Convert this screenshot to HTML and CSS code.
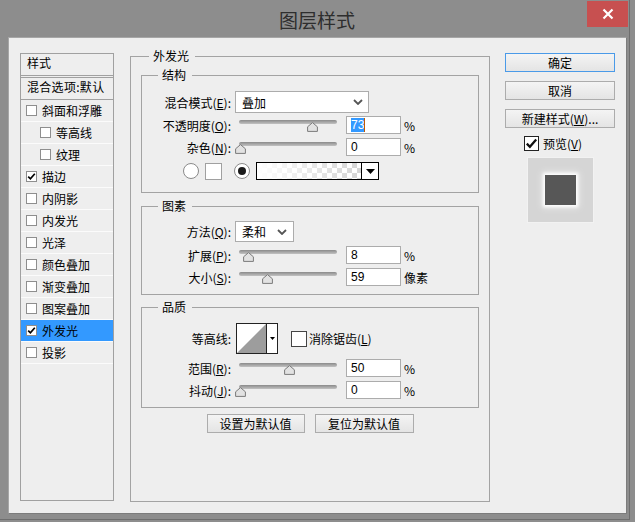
FILE: index.html
```html
<!DOCTYPE html>
<html>
<head>
<meta charset="utf-8">
<link rel="stylesheet" href="styles.css">
</head>
<body>
<div class="window">
  <div class="titlebar">
    <div class="title">图层样式</div>
    <div class="close"><svg width="12" height="12" viewBox="0 0 12 12"><path d="M1.5 1.5 L10.5 10.5 M10.5 1.5 L1.5 10.5" stroke="#fff" stroke-width="2.2" fill="none"/></svg></div>
  </div>
  <div class="content">
    <div class="list">
      <div class="list-head">样式</div>
      <div class="list-blend">混合选项:默认</div>
      <div class="item"><span class="cb"></span>斜面和浮雕</div>
      <div class="item sub"><span class="cb"></span>等高线</div>
      <div class="item sub"><span class="cb"></span>纹理</div>
      <div class="item"><span class="cb"><svg width="9" height="9" viewBox="0 0 9 9"><path d="M1.2 4.6 L3.4 6.8 L7.8 1.8" stroke="#000" stroke-width="1.7" fill="none"/></svg></span>描边</div>
      <div class="item"><span class="cb"></span>内阴影</div>
      <div class="item"><span class="cb"></span>内发光</div>
      <div class="item"><span class="cb"></span>光泽</div>
      <div class="item"><span class="cb"></span>颜色叠加</div>
      <div class="item"><span class="cb"></span>渐变叠加</div>
      <div class="item"><span class="cb"></span>图案叠加</div>
      <div class="item sel"><span class="cb"><svg width="9" height="9" viewBox="0 0 9 9"><path d="M1.2 4.6 L3.4 6.8 L7.8 1.8" stroke="#000" stroke-width="1.7" fill="none"/></svg></span>外发光</div>
      <div class="item"><span class="cb"></span>投影</div>
    </div>

    <div class="main">
      <div class="group outer">
        <div class="legend lg-outer">外发光</div>

        <div class="group inner s1">
          <div class="legend lg-inner">结构</div>
          <div class="row r-sel mt8">
            <div class="lbl">混合模式(<u>E</u>):</div>
            <div class="select wide"><span>叠加</span><svg width="10" height="6" viewBox="0 0 10 6"><path d="M1 1 L5 5 L9 1" stroke="#555" stroke-width="1.8" fill="none"/></svg></div>
          </div>
          <div class="row r mt3">
            <div class="lbl">不透明度(<u>O</u>):</div>
            <div class="slider"><div class="track"></div><svg class="thumb" style="left:72px" width="11" height="10" viewBox="0 0 11 10"><path d="M5.5 0.6 L10.4 4.8 L10.4 9.4 L0.6 9.4 L0.6 4.8 Z" fill="#e2e2e2" stroke="#7a7a7a" stroke-width="1"/></svg></div>
            <div class="num"><span class="hl">73</span><span class="caret"></span></div>
            <div class="unit">%</div>
          </div>
          <div class="row r mt4">
            <div class="lbl">杂色(<u>N</u>):</div>
            <div class="slider"><div class="track"></div><svg class="thumb" style="left:0px" width="11" height="10" viewBox="0 0 11 10"><path d="M5.5 0.6 L10.4 4.8 L10.4 9.4 L0.6 9.4 L0.6 4.8 Z" fill="#e2e2e2" stroke="#7a7a7a" stroke-width="1"/></svg></div>
            <div class="num">0</div>
            <div class="unit">%</div>
          </div>
          <div class="row r r-color">
            <div class="radio"></div>
            <div class="swatch"></div>
            <div class="radio on"></div>
            <div class="grad"><div class="grad-fill"></div><div class="grad-arrow"><svg width="9" height="5" viewBox="0 0 9 5"><path d="M0 0 L9 0 L4.5 5 Z" fill="#000"/></svg></div></div>
          </div>
        </div>

        <div class="group inner s2">
          <div class="legend lg-inner">图素</div>
          <div class="row r-sel2 mt7">
            <div class="lbl">方法(<u>Q</u>):</div>
            <div class="select small"><span>柔和</span><svg width="10" height="6" viewBox="0 0 10 6"><path d="M1 1 L5 5 L9 1" stroke="#555" stroke-width="1.8" fill="none"/></svg></div>
          </div>
          <div class="row r mt4">
            <div class="lbl">扩展(<u>P</u>):</div>
            <div class="slider"><div class="track"></div><svg class="thumb" style="left:8px" width="11" height="10" viewBox="0 0 11 10"><path d="M5.5 0.6 L10.4 4.8 L10.4 9.4 L0.6 9.4 L0.6 4.8 Z" fill="#e2e2e2" stroke="#7a7a7a" stroke-width="1"/></svg></div>
            <div class="num">8</div>
            <div class="unit">%</div>
          </div>
          <div class="row r mt4">
            <div class="lbl">大小(<u>S</u>):</div>
            <div class="slider"><div class="track"></div><svg class="thumb" style="left:27px" width="11" height="10" viewBox="0 0 11 10"><path d="M5.5 0.6 L10.4 4.8 L10.4 9.4 L0.6 9.4 L0.6 4.8 Z" fill="#e2e2e2" stroke="#7a7a7a" stroke-width="1"/></svg></div>
            <div class="num">59</div>
            <div class="unit">像素</div>
          </div>
        </div>

        <div class="group inner s3">
          <div class="legend lg-inner">品质</div>
          <div class="row r-contour mt8">
            <div class="lbl">等高线:</div>
            <div class="contour">
              <div class="contour-img"><svg width="29" height="29" viewBox="0 0 29 29"><path d="M0 29 L29 0 L29 29 Z" fill="#9d9d9d"/></svg></div>
              <div class="contour-drop"><svg width="5" height="3" viewBox="0 0 5 3"><path d="M0 0 L5 0 L2.5 3 Z" fill="#000"/></svg></div>
            </div>
            <div class="aa-cb"></div>
            <div class="aa-text">消除锯齿(<u>L</u>)</div>
          </div>
          <div class="row r mt5">
            <div class="lbl">范围(<u>R</u>):</div>
            <div class="slider"><div class="track"></div><svg class="thumb" style="left:49px" width="11" height="10" viewBox="0 0 11 10"><path d="M5.5 0.6 L10.4 4.8 L10.4 9.4 L0.6 9.4 L0.6 4.8 Z" fill="#e2e2e2" stroke="#7a7a7a" stroke-width="1"/></svg></div>
            <div class="num">50</div>
            <div class="unit">%</div>
          </div>
          <div class="row r mt4">
            <div class="lbl">抖动(<u>J</u>):</div>
            <div class="slider"><div class="track"></div><svg class="thumb" style="left:0px" width="11" height="10" viewBox="0 0 11 10"><path d="M5.5 0.6 L10.4 4.8 L10.4 9.4 L0.6 9.4 L0.6 4.8 Z" fill="#e2e2e2" stroke="#7a7a7a" stroke-width="1"/></svg></div>
            <div class="num">0</div>
            <div class="unit">%</div>
          </div>
        </div>

        <div class="defaults">
          <div class="btn w98">设置为默认值</div>
          <div class="btn w99">复位为默认值</div>
        </div>
      </div>
    </div>

    <div class="side">
      <div class="btn sbtn default">确定</div>
      <div class="btn sbtn">取消</div>
      <div class="btn sbtn">新建样式(<u>W</u>)...</div>
      <div class="pv">
        <span class="pv-cb"><svg width="13" height="13" viewBox="0 0 13 13"><path d="M1.8 6.6 L4.9 9.7 L11.2 2.6" stroke="#111" stroke-width="2.3" fill="none"/></svg></span>
        <span>预览(<u>V</u>)</span>
      </div>
      <div class="preview"><div class="pv-square"></div></div>
    </div>
  </div>
</div>
</body>
</html>
```

FILE: styles.css
```css
html, body {
  margin: 0;
  padding: 0;
}
body {
  background: #8d8d8d;
  font-family: "Noto Sans CJK SC", "Noto Sans", sans-serif;
  font-size: 12px;
  color: #000;
}
u {
  text-decoration: underline;
  text-underline-offset: 1px;
}
.window {
  width: 629px;
  height: 519px;
  border-right: 1px solid #6e6e6e;
  border-bottom: 1px solid #6e6e6e;
}
.titlebar {
  height: 37px;
  display: grid;
  grid-template-columns: 1fr auto 1fr;
  align-items: start;
}
.title {
  grid-column: 2;
  font-size: 19px;
  line-height: 19px;
  padding-top: 10px;
  padding-left: 5px;
  color: #2e2e2e;
}
.close {
  grid-column: 3;
  justify-self: end;
  margin-top: 1px;
  margin-right: 1px;
  width: 41px;
  height: 26px;
  background: #c75050;
  display: flex;
  align-items: center;
  justify-content: center;
}
.content {
  margin-left: 8px;
  width: 619px;
  height: 477px;
  box-sizing: border-box;
  border: 1px solid #a6a6a6;
  border-right-color: #7c7c7c;
  border-bottom-color: #7c7c7c;
  background: #eeeeee;
  display: flex;
  align-items: flex-start;
  padding: 15px 0 0 11px;
}

/* left list */
.list {
  width: 94px;
  height: 448px;
  box-sizing: border-box;
  border: 1px solid #a0a0a0;
  flex: none;
}
.list-head {
  height: 21px;
  line-height: 18px;
  padding-left: 6px;
  border-bottom: 1px solid #a0a0a0;
}
.list-blend {
  margin-top: 1px;
  border-top: 1px solid #a0a0a0;
  border-bottom: 1px solid #a0a0a0;
  height: 21px;
  line-height: 18px;
  padding-left: 6px;
  white-space: nowrap;
  overflow: hidden;
  letter-spacing: 0.3px;
}
.item {
  height: 21px;
  border-bottom: 1px solid #fbfbfb;
  display: flex;
  align-items: center;
  padding-left: 5px;
  gap: 5px;
  white-space: nowrap;
}
.item.sub {
  padding-left: 19px;
}
.item.sel {
  background: #3399ff;
}
.cb {
  width: 11px;
  height: 11px;
  box-sizing: border-box;
  border: 1px solid #8e8e8e;
  background: #fff;
  display: flex;
  align-items: center;
  justify-content: center;
  flex: none;
}

/* main panel */
.main {
  margin-left: 16px;
  margin-top: 3px;
  width: 360px;
  flex: none;
}
.group {
  border: 1px solid #a3a3a3;
  box-sizing: border-box;
}
.legend {
  width: fit-content;
  margin-top: -9px;
  height: 16px;
  line-height: 16px;
  padding: 0 6px 0 4px;
  background: #eeeeee;
  white-space: nowrap;
}
.outer {
  padding: 0 10px;
  height: 446px;
}
.lg-outer {
  margin-left: 8px;
}
.lg-inner {
  margin-left: 16px;
}
.s1 {
  margin-top: 11px;
  padding-bottom: 12px;
}
.s2 {
  margin-top: 13px;
  padding-bottom: 8px;
}
.s3 {
  margin-top: 12px;
  padding-bottom: 8px;
}
.row {
  display: flex;
  align-items: center;
  white-space: nowrap;
}
.r-sel { height: 22px; }
.r-sel2 { height: 21px; }
.r { height: 18px; }
.mt3 { margin-top: 3px; }
.mt4 { margin-top: 4px; }
.mt5 { margin-top: 5px; }
.mt7 { margin-top: 7px; }
.mt8 { margin-top: 8px; }
.lbl {
  width: 89px;
  margin-right: 4px;
  text-align: right;
  flex: none;
}
.select {
  height: 22px;
  box-sizing: border-box;
  border: 1px solid #acacac;
  background: #fff;
  display: flex;
  align-items: center;
  justify-content: space-between;
  padding: 0 5px 0 6px;
  flex: none;
}
.select.wide { width: 134px; }
.select.small {
  width: 59px;
  height: 21px;
  padding-right: 6px;
}
.slider {
  position: relative;
  width: 102px;
  height: 18px;
  flex: none;
  align-self: flex-start;
}
.track {
  margin-top: 4px;
  margin-left: 4px;
  width: 98px;
  height: 4px;
  border-radius: 2px;
  background: linear-gradient(#8a8a8a, #c2c2c2);
}
.thumb {
  position: absolute;
  top: 6px;
}
.num {
  margin-left: 9px;
  width: 55px;
  height: 18px;
  box-sizing: border-box;
  border: 1px solid #acacac;
  background: #fff;
  padding-left: 4px;
  line-height: 16px;
  font-family: "Liberation Sans", Arial, sans-serif;
  font-size: 12px;
  flex: none;
  display: flex;
  align-items: center;
}
.hl {
  background: #3399ff;
  color: #fff;
  line-height: 14px;
}
.caret {
  display: inline-block;
  width: 1px;
  height: 14px;
  background: #c05a00;
}
.unit {
  margin-left: 3px;
}
.r-color {
  margin-top: 6px;
  padding-left: 41px;
}
.radio {
  width: 16px;
  height: 16px;
  box-sizing: border-box;
  border: 1px solid #8a8a8a;
  border-radius: 50%;
  background: #fff;
  flex: none;
}
.radio.on {
  margin-left: 12px;
  display: flex;
  align-items: center;
  justify-content: center;
}
.radio.on::after {
  content: "";
  width: 8px;
  height: 8px;
  border-radius: 50%;
  background: #1a1a1a;
}
.swatch {
  margin-left: 6px;
  width: 17px;
  height: 17px;
  box-sizing: border-box;
  border: 1px solid #a0a0a0;
  background: #fff;
  flex: none;
}
.grad {
  margin-left: 6px;
  width: 123px;
  height: 18px;
  box-sizing: border-box;
  border: 1px solid #000;
  display: flex;
  flex: none;
}
.grad-fill {
  flex: 1;
  background:
    linear-gradient(to right, #fff 0%, rgba(255,255,255,0.15) 100%),
    repeating-conic-gradient(#cdcdcd 0 25%, #fff 0 50%) 0 0 / 10px 10px;
}
.grad-arrow {
  width: 16px;
  border-left: 1px solid #000;
  background: #fff;
  display: flex;
  align-items: center;
  justify-content: center;
}
.r-contour {
  height: 31px;
}
.contour {
  margin-left: 1px;
  width: 42px;
  height: 31px;
  box-sizing: border-box;
  border: 1px solid #222;
  display: flex;
  flex: none;
  background: #fff;
}
.contour-img {
  width: 29px;
  height: 29px;
  display: flex;
}
.contour-drop {
  flex: 1;
  border-left: 1px solid #222;
  display: flex;
  align-items: center;
  justify-content: center;
}
.aa-cb {
  margin-left: 13px;
  width: 16px;
  height: 16px;
  box-sizing: border-box;
  border: 1px solid #444;
  background: #fff;
  flex: none;
}
.aa-text {
  margin-left: 2px;
}
.defaults {
  margin-top: 6px;
  display: flex;
  justify-content: center;
  gap: 10px;
}
.btn {
  height: 19px;
  box-sizing: border-box;
  border: 1px solid #acacac;
  background: linear-gradient(#f4f4f4, #e4e4e4);
  text-align: center;
  line-height: 17px;
  white-space: nowrap;
}
.w98 { width: 98px; }
.w99 { width: 99px; }

/* side column */
.side {
  margin-left: 15px;
  width: 110px;
  display: flex;
  flex-direction: column;
  align-items: flex-start;
  flex: none;
}
.sbtn {
  width: 110px;
}
.sbtn + .sbtn {
  margin-top: 9px;
}
.btn.default {
  border-color: #4a9ae8;
}
.pv {
  margin-top: 8px;
  margin-left: 19px;
  height: 15px;
  display: flex;
  align-items: center;
  gap: 4px;
  white-space: nowrap;
}
.pv-cb {
  width: 15px;
  height: 15px;
  box-sizing: border-box;
  border: 1px solid #222;
  background: #fff;
  display: flex;
  align-items: center;
  justify-content: center;
}
.preview {
  margin-top: 6px;
  margin-left: 22px;
  width: 67px;
  height: 66px;
  box-sizing: border-box;
  border: 1px solid #f2f2f2;
  background: #d5d5d5;
  display: flex;
  align-items: center;
  justify-content: center;
}
.pv-square {
  width: 31px;
  height: 30px;
  background: #575757;
  box-shadow: 0 0 3px 2px rgba(255,255,255,0.95), 0 0 7px 3px rgba(255,255,255,0.5);
}
```
